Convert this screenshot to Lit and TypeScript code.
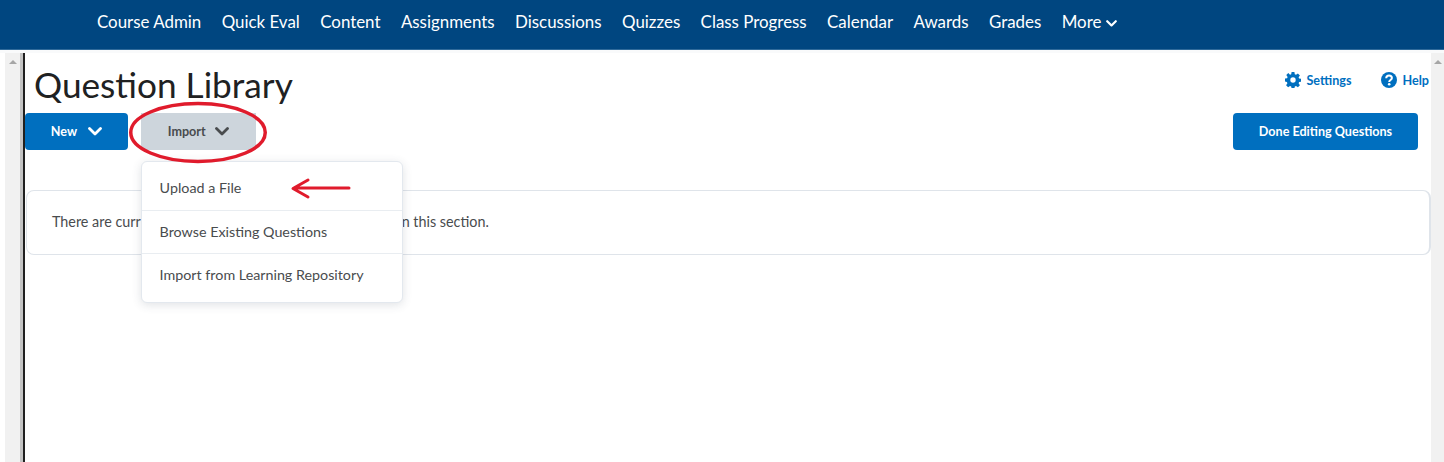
import { LitElement, html, css, svg } from "lit";
import { customElement } from "lit/decorators.js";

const NAV = ["Course Admin", "Quick Eval", "Content", "Assignments", "Discussions", "Quizzes", "Class Progress", "Calendar", "Awards", "Grades"];
const chev = () => html`<svg viewBox="0 0 14 9"><path d=${"M1.5 1.500 7 7l5.500-5.500"} fill="none" stroke="currentColor" stroke-width="2.800" stroke-linecap="round" stroke-linejoin="round"/></svg>`;

@customElement("app-root")
export class AppRoot extends LitElement {
  static styles = css`
    :host { display: block; width: 1444px; height: 462px; overflow: hidden; position: relative; background: #fff; font-family: Lato, "Noto Sans", sans-serif; color: #494c4e; }
    .nav { background: #004680; border-bottom: 1px solid #2f6a9a; display: flex; align-items: center; gap: 20.4px; padding: 0 0 6px 97px; box-sizing: border-box; height: 50px; color: #fff; font-size: 16.9px; }
    .nav span { white-space: nowrap; }
    .more { display: flex; align-items: center; gap: 5px; }
    .more svg { width: 11px; height: 7px; margin-top: 3px; }
    .sep { height: 3px; background: #f9fafb; }
    .body { display: flex; height: 409px; }
    .gut { width: 25px; flex: none; display: flex; box-sizing: border-box; padding-left: 5px; }
    .track { width: 15px; background: #f1f1f1; display: flex; justify-content: center; padding-top: 7px; box-sizing: border-box; }
    .up { width: 0; height: 0; border-left: 4px solid transparent; border-right: 4px solid transparent; border-bottom: 4px solid #a6a6a6; }
    .g2 { width: 3px; background: #c4c4c4; }
    .g3 { width: 2px; background: #202020; }
    .main { flex: 1; min-width: 0; position: relative; padding: 10px 0 0 0; box-sizing: border-box; }
    .rtrack { width: 13px; flex: none; background: #f1f1f1; display: flex; justify-content: center; padding-top: 7px; box-sizing: border-box; }
    .head { display: flex; justify-content: space-between; align-items: flex-start; height: 50px; }
    h1 { margin: 0 0 0 9px; font-weight: 400; font-size: 35.2px; line-height: 42px; color: #202122; }
    .links { display: flex; gap: 30px; padding: 7px 2px 0 0; color: #006fbf; font-size: 12.6px; font-weight: 700; }
    .link { display: flex; align-items: center; gap: 5px; height: 20px; }
    .link svg { width: 16px; height: 16px; }
    .bar { display: flex; align-items: center; height: 37px; padding-right: 13px; }
    .btn { height: 37px; box-sizing: border-box; border-radius: 4px; font-size: 12.6px; font-weight: 700; display: flex; align-items: center; justify-content: center; white-space: nowrap; }
    .btn svg { width: 14px; height: 9px; }
    .new { width: 103px; background: #006fbf; color: #fff; gap: 11px; margin-right: 13px; }
    .imp { width: 115px; background: #cdd5dc; color: #494c4e; border-radius: 0; gap: 9.5px; }
    .done { width: 185px; background: #006fbf; color: #fff; margin-left: auto; }
    .panel { margin: 40px 0 0 1px; height: 65px; box-sizing: border-box; border: 1px solid #dfe4ea; border-right-width: 2px; border-radius: 8px; padding: 0 0 2px 25px; display: flex; align-items: center; font-size: 14.35px; color: #494c4e; white-space: nowrap; }
    .rest { margin-left: 261px; }
    .menu { position: absolute; left: 116px; top: 108px; width: 262px; height: 142px; box-sizing: border-box; background: #fff; border: 1px solid #e3e8ee; border-radius: 6px; box-shadow: 0 2px 10px rgba(60, 75, 95, .16); display: flex; flex-direction: column; }
    .item { height: 43px; flex: none; box-sizing: border-box; display: flex; align-items: center; padding: 0 0 2px 17.6px; font-size: 14.3px; color: #494c4e; white-space: nowrap; border-bottom: 1px solid #e9edf1; }
    .item.first { height: 49px; padding-top: 3px; padding-bottom: 0; }
    .item.last { height: 48px; padding-bottom: 8px; border-bottom: 0; }
    .mark { position: absolute; left: 0; top: 0; width: 1419px; height: 409px; pointer-events: none; overflow: visible; }
  `;

  render() {
    return html`
      <div class="nav">
        ${NAV.map((n) => html`<span>${n}</span>`)}
        <span class="more">More ${chev()}</span>
      </div>
      <div class="sep"></div>
      <div class="body">
        <div class="gut"><div class="track"><div class="up"></div></div><div class="g2"></div><div class="g3"></div></div>
        <div class="main">
          <div class="head">
            <h1>Question Library</h1>
            <div class="links">
              <span class="link">
                <svg viewBox="0 0 16 16"><path fill="#006fbf" fill-rule="evenodd" d="M6.600 0h2.800l.4 2.200 1.200.5L12.900 1.400l2 2-1.300 1.900.5 1.200 2.200.4v2.800l-2.200.4-.5 1.200 1.300 1.900-2 2-1.900-1.300-1.200.5-.4 2.200H6.600l-.4-2.200-1.200-.5-1.900 1.300-2-2 1.300-1.900-.5-1.200L-.1 9.400V6.600l2.200-.4.5-1.200L1.300 3.100l2-2L5 2.700l1.200-.5zM8 5.300a2.700 2.700 0 1 0 0 5.400 2.700 2.700 0 0 0 0-5.400z"/></svg>
                Settings
              </span>
              <span class="link">
                <svg viewBox="0 0 16 16"><circle cx="8" cy="8" r="8" fill="#006fbf"/><path d="M5.200 6.200C5.300 4.400 6.500 3.400 8 3.400c1.600 0 2.900 1 2.900 2.500 0 2.100-2.700 2-2.700 4" fill="none" stroke="#fff" stroke-width="2"/><circle cx="8.200" cy="12.300" r="1.300" fill="#fff"/></svg>
                Help
              </span>
            </div>
          </div>
          <div class="bar">
            <div class="btn new">New ${chev()}</div>
            <div class="btn imp">Import ${chev()}</div>
            <div class="btn done">Done Editing Questions</div>
          </div>
          <div class="panel"><span>There are curr</span><span class="rest">n this section.</span></div>
          <div class="menu">
            <div class="item first">Upload a File</div>
            <div class="item">Browse Existing Questions</div>
            <div class="item last">Import from Learning Repository</div>
          </div>
          <svg class="mark" viewBox="0 0 1419 409">
            ${svg`<ellipse cx="173" cy="79.500" rx="67.250" ry="29" fill="none" stroke="#e01b2c" stroke-width="3.500"/>
            <path d="M324 135H269M283 127 268 135.500 283 144" fill="none" stroke="#e01b2c" stroke-width="3" stroke-linecap="round" stroke-linejoin="round"/>`}
          </svg>
        </div>
        <div class="rtrack"><div class="up"></div></div>
      </div>
    `;
  }
}
